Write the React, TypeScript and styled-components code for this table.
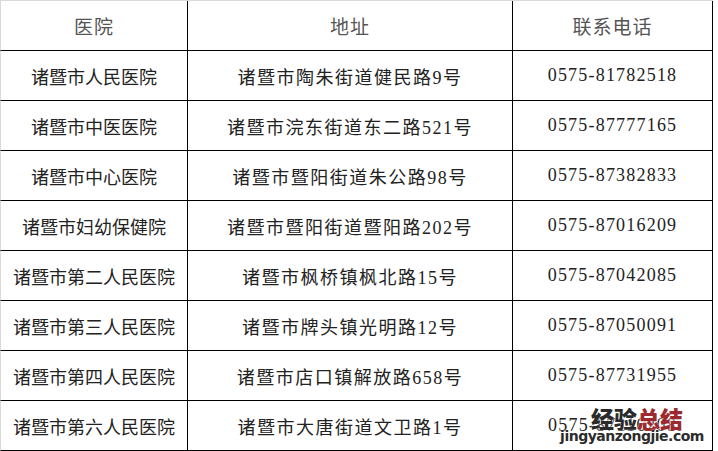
import React from "react";
import styled, { createGlobalStyle } from "styled-components";

const Global = createGlobalStyle`
  html, body { margin: 0; padding: 0; background: #fff; }
  body { font-family: "Liberation Serif", "Noto Sans CJK SC", serif; }
`;

const Page = styled.div`
  position: relative;
  width: 718px;
  height: 451px;
  overflow: hidden;
  background: #fff;
`;

const Table = styled.div`
  display: grid;
  grid-template-columns: 188px 325px 200px;
  grid-auto-rows: 50px;
  width: 713px;
  box-sizing: border-box;
  border-top: 1px solid #d9d9d9;
`;

type Kind = "name" | "addr" | "phone";

const Cell = styled.div<{ $first?: boolean; $head?: boolean; $kind?: Kind }>`
  display: flex;
  align-items: center;
  justify-content: center;
  box-sizing: border-box;
  border-bottom: 1px solid #000;
  border-right: 1px solid #000;
  border-left: ${(p) => (p.$first ? "1px solid #d9d9d9" : "none")};
  font-family: "Liberation Serif", "Noto Sans CJK SC", serif;
  font-size: ${(p) => (p.$head ? "19px" : "18px")};
  color: ${(p) => (p.$head ? "#555" : "#222")};
  letter-spacing: ${(p) =>
    p.$head ? "1px" : p.$kind === "addr" ? "1.5px" : p.$kind === "phone" ? "1.2px" : "0"};
  white-space: nowrap;
`;

const Watermark = styled.div`
  position: absolute;
  left: 557px;
  top: 407px;
  display: flex;
  flex-direction: column;
  align-items: center;
  width: 150px;
  line-height: 1;
`;

const MarkTitle = styled.div`
  font-family: "Noto Sans CJK SC", sans-serif;
  font-weight: 900;
  font-size: 23px;
  padding-left: 10px;
  text-shadow: 0 0 2px #fff;
`;

const Dark = styled.span`
  color: #2a2a2a;
`;

const Red = styled.span`
  color: #9c2a2e;
`;

const MarkUrl = styled.div`
  font-family: "DejaVu Sans", sans-serif;
  font-weight: 700;
  font-size: 14px;
  color: #2c2c2c;
  letter-spacing: -0.5px;
  margin-top: -1px;
  text-shadow: 0 0 2px #fff;
`;

const rows: [string, string, string][] = [
  ["诸暨市人民医院", "诸暨市陶朱街道健民路9号", "0575-81782518"],
  ["诸暨市中医医院", "诸暨市浣东街道东二路521号", "0575-87777165"],
  ["诸暨市中心医院", "诸暨市暨阳街道朱公路98号", "0575-87382833"],
  ["诸暨市妇幼保健院", "诸暨市暨阳街道暨阳路202号", "0575-87016209"],
  ["诸暨市第二人民医院", "诸暨市枫桥镇枫北路15号", "0575-87042085"],
  ["诸暨市第三人民医院", "诸暨市牌头镇光明路12号", "0575-87050091"],
  ["诸暨市第四人民医院", "诸暨市店口镇解放路658号", "0575-87731955"],
  ["诸暨市第六人民医院", "诸暨市大唐街道文卫路1号", "0575-87116208"],
];

export default function App() {
  return (
    <Page>
      <Global />
      <Table>
        <Cell $first $head>医院</Cell>
        <Cell $head>地址</Cell>
        <Cell $head>联系电话</Cell>
        {rows.map((r, i) => (
          <React.Fragment key={i}>
            <Cell $first $kind="name">{r[0]}</Cell>
            <Cell $kind="addr">{r[1]}</Cell>
            <Cell $kind="phone">{r[2]}</Cell>
          </React.Fragment>
        ))}
      </Table>
      <Watermark>
        <MarkTitle>
          <Dark>经验</Dark>
          <Red>总结</Red>
        </MarkTitle>
        <MarkUrl>jingyanzongjie.com</MarkUrl>
      </Watermark>
    </Page>
  );
}
